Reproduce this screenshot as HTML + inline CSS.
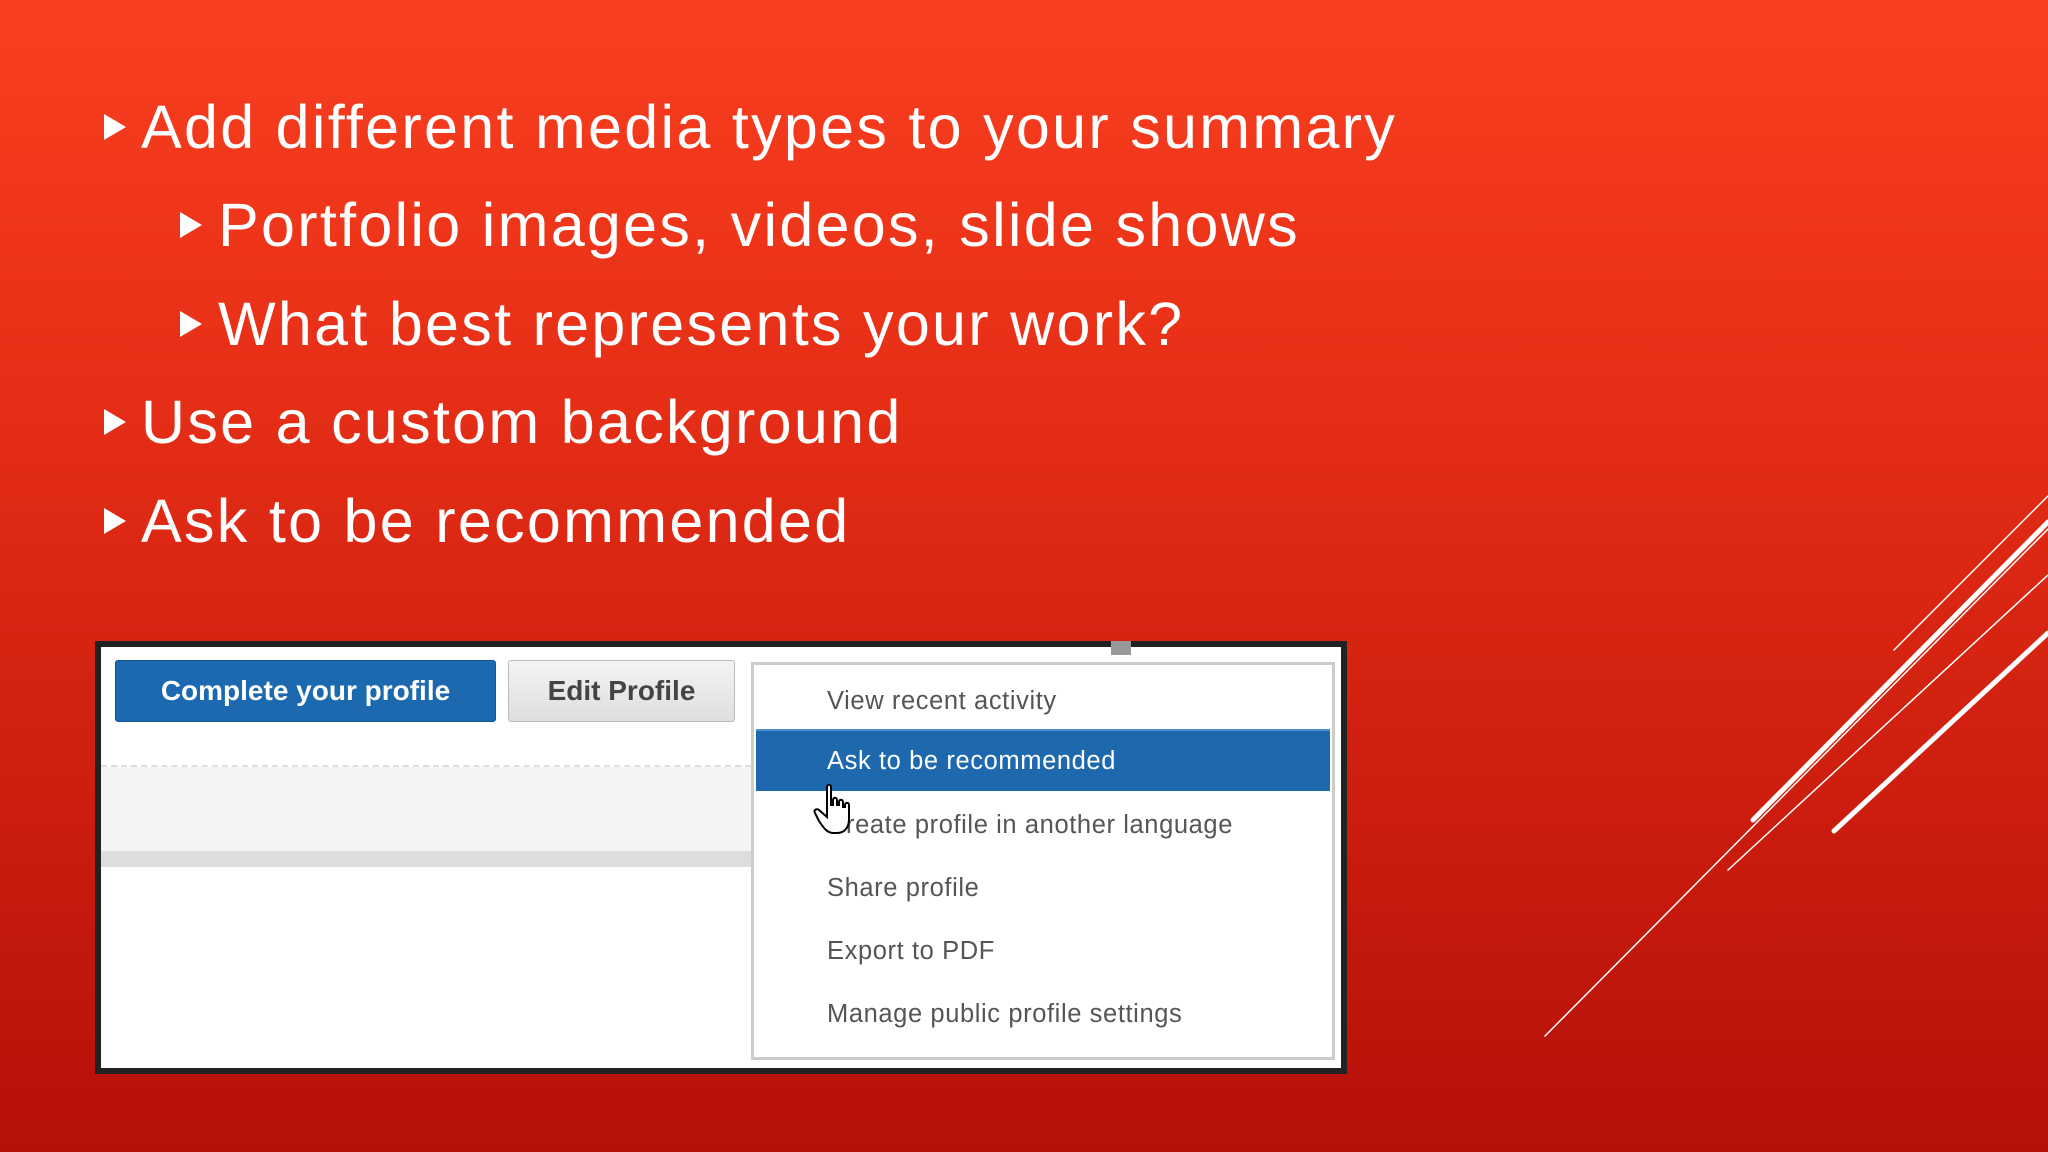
<!DOCTYPE html>
<html><head><meta charset="utf-8"><style>
*{margin:0;padding:0;box-sizing:border-box}
body{width:2048px;height:1152px;overflow:hidden;position:relative;
background:linear-gradient(180deg,#fa3f20 0%,#e52e16 35%,#cc1d0e 70%,#b5100a 100%);
font-family:"Liberation Sans",sans-serif}
.b{position:absolute;color:#fff;font-size:61px;white-space:nowrap;line-height:1;letter-spacing:2.3px}
.t{position:absolute;width:0;height:0;border-top:13px solid transparent;border-bottom:13px solid transparent;border-left:22px solid #fff}
#box{position:absolute;left:95px;top:641px;width:1252px;height:433px;background:#fff;border:6px solid #222}
.btn{position:absolute;font-weight:bold;font-size:28px;display:flex;align-items:center;justify-content:center;border-radius:3px}
.mi{position:absolute;left:73px;font-size:25.5px;letter-spacing:0.6px;color:#555;white-space:nowrap}
</style></head><body>
<div class="t" style="left:104px;top:114px"></div><div class="b" style="left:141px;top:97px">Add different media types to your summary</div>
<div class="t" style="left:180px;top:212px"></div><div class="b" style="left:218px;top:195px">Portfolio images, videos, slide shows</div>
<div class="t" style="left:180px;top:311px"></div><div class="b" style="left:218px;top:294px">What best represents your work?</div>
<div class="t" style="left:104px;top:409px"></div><div class="b" style="left:141px;top:392px">Use a custom background</div>
<div class="t" style="left:104px;top:508px"></div><div class="b" style="left:141px;top:491px">Ask to be recommended</div>

<svg style="position:absolute;left:0;top:0" width="2048" height="1152">
<g stroke="#fff" stroke-linecap="round" fill="none">
<line x1="2048" y1="496" x2="1894" y2="650" stroke-width="1.5"/>
<line x1="2048" y1="522" x2="1753" y2="820" stroke-width="5"/>
<line x1="2048" y1="529" x2="1545" y2="1036" stroke-width="1.5"/>
<line x1="2048" y1="575" x2="1728" y2="870" stroke-width="1.5"/>
<line x1="2048" y1="633" x2="1834" y2="831" stroke-width="5"/>
</g></svg>

<div id="box">
<div style="position:absolute;left:1010px;top:-6px;width:20px;height:14px;background:#999"></div>
<div class="btn" style="left:14px;top:13px;width:381px;height:62px;background:#1d69b0;color:#fff;border:1px solid #145391">Complete your profile</div>
<div class="btn" style="left:407px;top:13px;width:227px;height:62px;background:linear-gradient(#f4f4f4,#dedede);color:#444;border:1px solid #bbb">Edit Profile</div>
<div style="position:absolute;left:0;top:118px;width:650px;border-top:2px dashed #ddd"></div>
<div style="position:absolute;left:0;top:120px;width:650px;height:84px;background:#f4f4f4"></div>
<div style="position:absolute;left:0;top:204px;width:650px;height:16px;background:#ddd"></div>
<div style="position:absolute;left:650px;top:15px;width:584px;height:398px;background:#fff;border:3px solid #ccc">
<div class="mi" style="top:22px">View recent activity</div>
<div style="position:absolute;left:2px;top:64px;width:574px;height:62px;background:#1e68ad;border-top:2px solid #4a8fd0"></div>
<div class="mi" style="top:82px;color:#fff">Ask to be recommended</div>
<div class="mi" style="top:146px">Create profile in another language</div>
<div class="mi" style="top:209px">Share profile</div>
<div class="mi" style="top:272px">Export to PDF</div>
<div class="mi" style="top:335px">Manage public profile settings</div>
</div>
<svg style="position:absolute;left:712px;top:136px" width="44" height="56" viewBox="0 0 22 28">
<path d="M7 2 C7 0.5 9 0.5 9 2 V11 L10 11 V8.5 C10 7 12 7 12 8.5 V11 L13 11 V9.5 C13 8 15 8 15 9.5 V12 L16 12 V11 C16 9.5 18 9.5 18 11 V18 C18 22 16 25 12 25 H10 C7 25 5 22 3 19 L1 15 C0 13.5 2 12.5 3 13.5 L7 17 Z" fill="#fff" stroke="#000" stroke-width="1"/>
</svg>
</div>
</body></html>
